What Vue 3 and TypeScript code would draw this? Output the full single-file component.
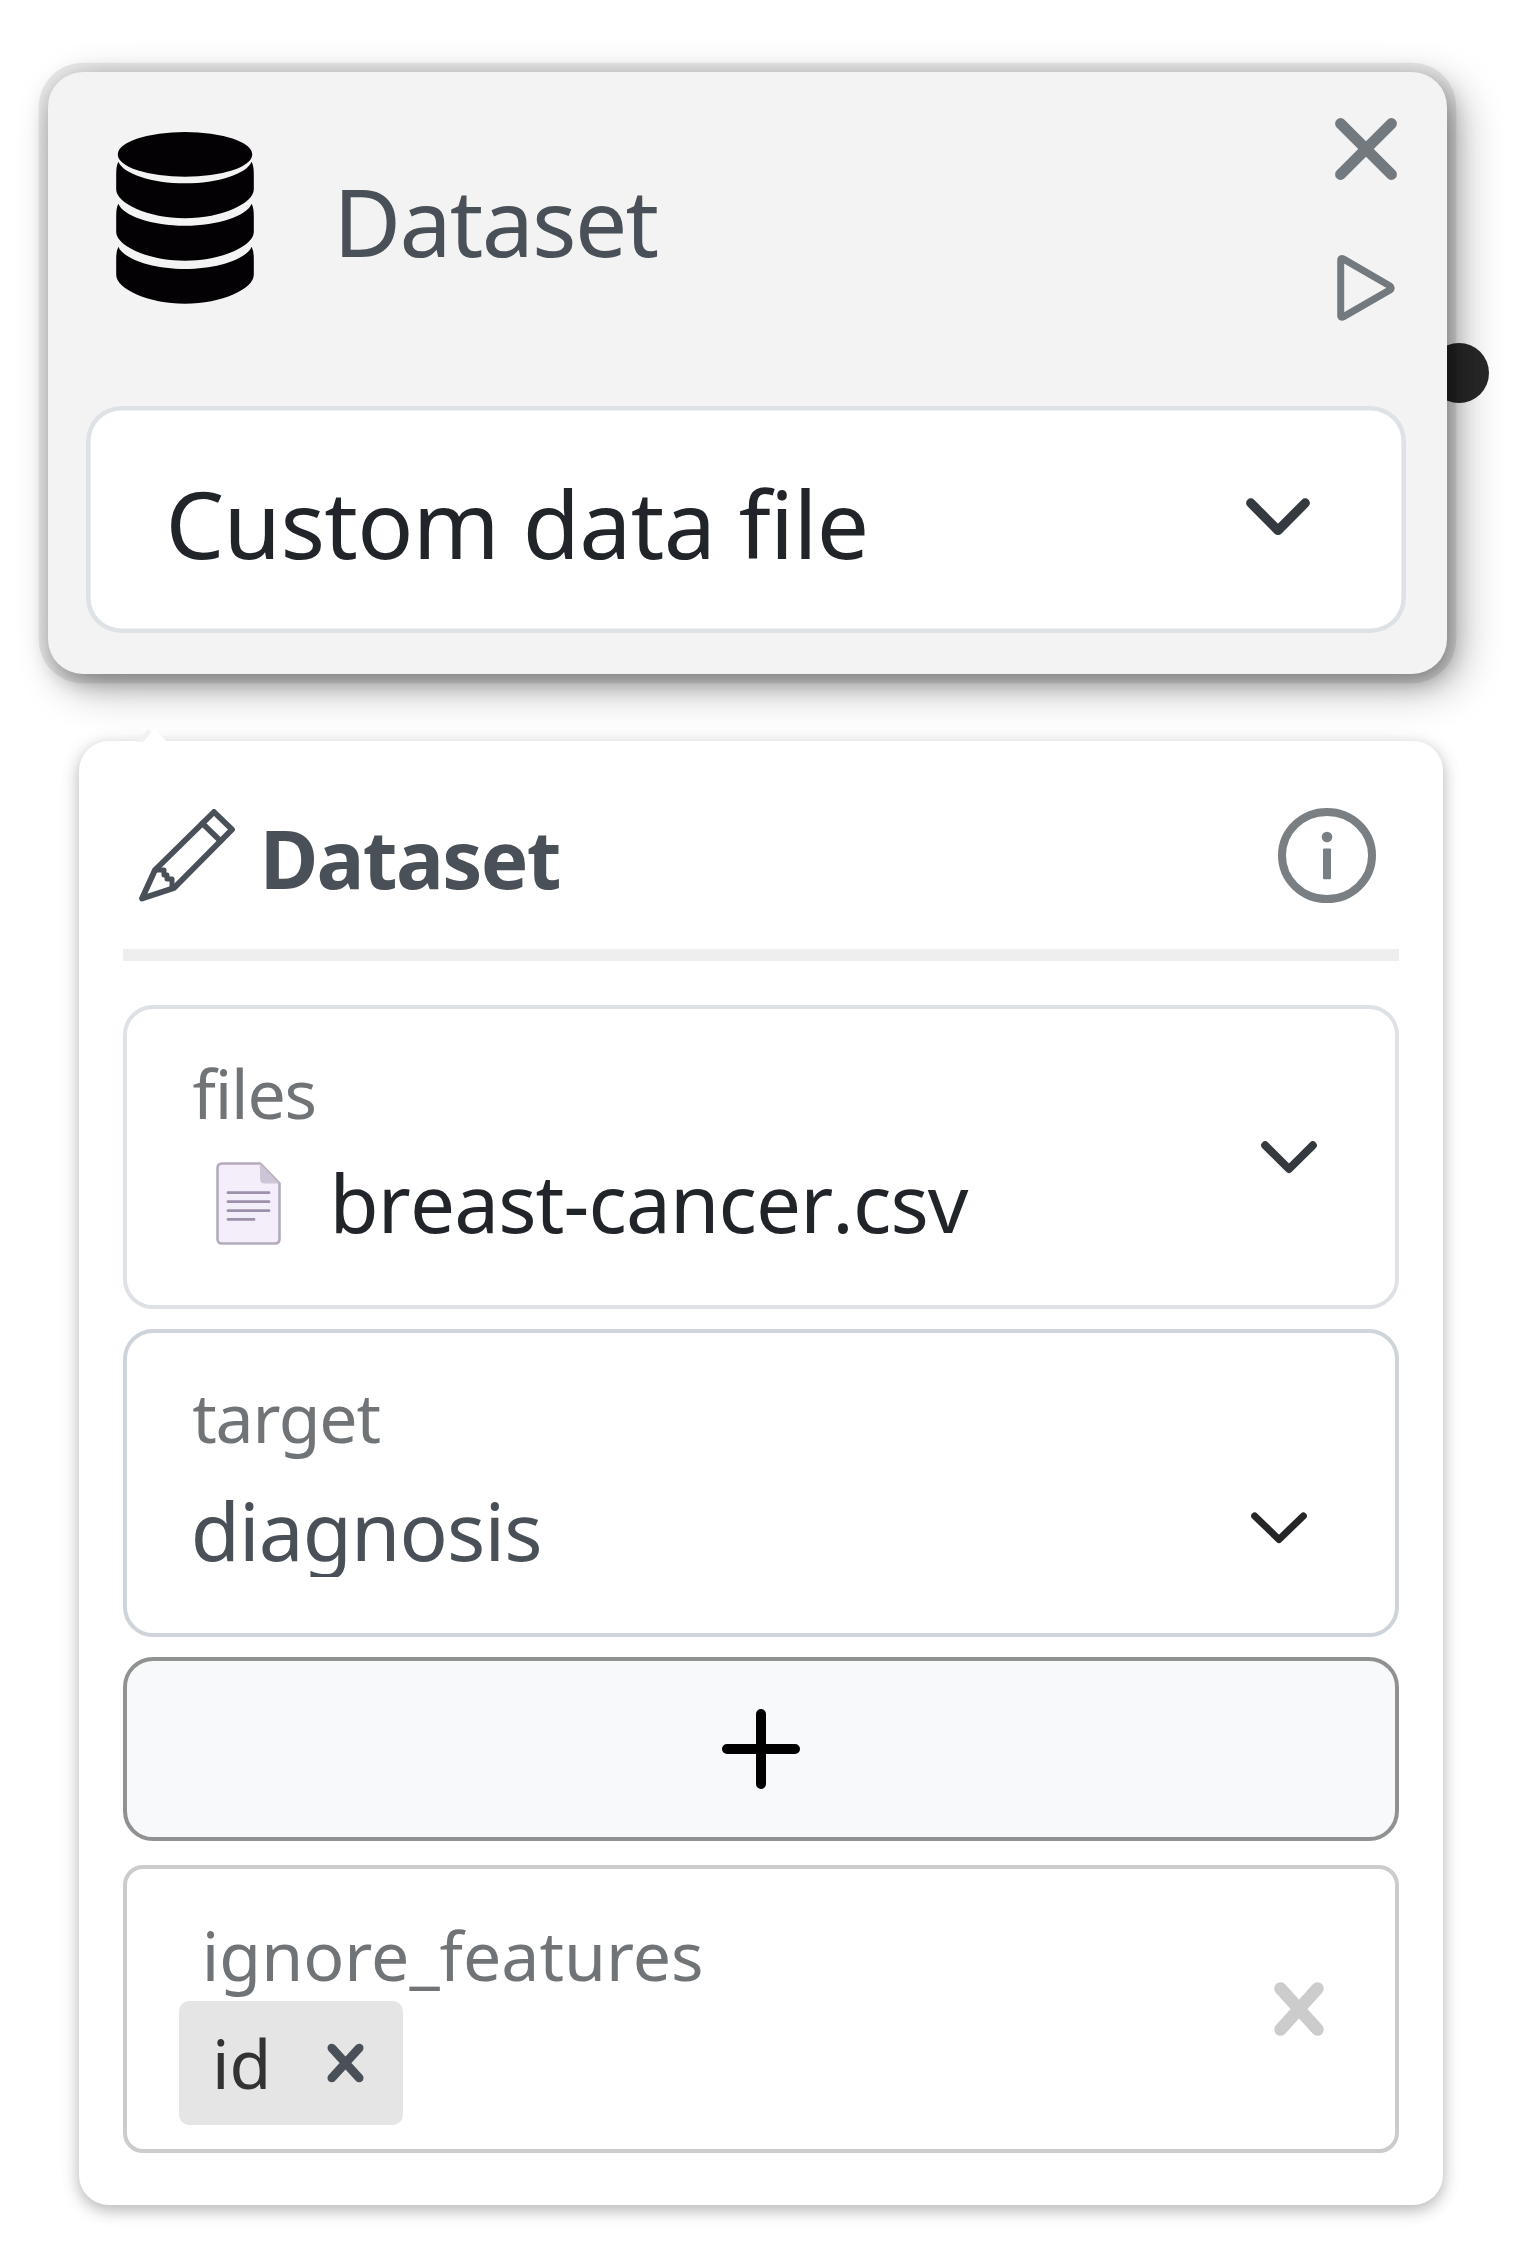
<script setup lang="ts">
import { ref } from 'vue'

interface DiskLayer {
  tip: number
  dip: number
  base: number
}

const nodeTitle = ref('Dataset')
const source = ref('Custom data file')
const fileName = ref('breast-cancer.csv')
const target = ref('diagnosis')
const ignored = ref<string[]>(['id'])

const layers: DiskLayer[] = [
  { tip: 29.7, dip: 51.3, base: 86.3 },
  { tip: 71.7, dip: 93.7, base: 128.7 },
  { tip: 114.7, dip: 137, base: 171.7 },
]

function layerPath({ tip, dip, base }: DiskLayer): string {
  return (
    `M2.4 ${tip}C7 ${tip + 12} 36 ${dip} 69 ${dip}S131 ${tip + 12} 135.6 ${tip}` +
    `Q137.8 ${tip + 4} 137.8 ${tip + 12}V${base - 29}C137.8 ${base - 15} 106 ${base} 69 ${base}` +
    `S.2 ${base - 15} .2 ${base - 29}V${tip + 12}Q.2 ${tip + 4} 2.4 ${tip}Z`
  )
}

function removeIgnored(name: string): void {
  ignored.value = ignored.value.filter((n) => n !== name)
}
</script>

<template>
  <main class="canvas">
    <section class="node">
      <span class="handle"></span>
      <div class="node-body">
        <header class="node-head">
          <svg class="db" viewBox="0 0 138 172">
            <ellipse cx="69" cy="22.4" rx="67.2" ry="22.4" />
            <path v-for="layer in layers" :key="layer.tip" :d="layerPath(layer)" />
          </svg>
          <h1 class="node-title">{{ nodeTitle }}</h1>
          <div class="actions">
            <svg class="close" viewBox="0 0 62 62"><path d="M5.6 5.6 56.4 56.4M56.4 5.6 5.6 56.4" /></svg>
            <svg class="play" viewBox="0 0 58 66"><path d="M3.7 5.6Q3.7 2.6 6.6 4.1L53 31Q55.5 32.9 53 34.9L6.6 61.6Q3.7 63.2 3.7 60.2Z" /></svg>
          </div>
        </header>
        <div class="select">
          <span class="select-text">{{ source }}</span>
          <svg class="chev-lg" viewBox="0 0 64 38"><path d="M4.8 5 32 32.4 59.2 5" /></svg>
        </div>
      </div>
    </section>

    <section class="panel">
      <svg class="notch" viewBox="0 0 34 14">
        <path d="M0 14 12 1 15 5 8 14Z" fill="#f2f2f2" />
        <path d="M7 14 19 1 31 14Z" fill="#fff" />
      </svg>
      <header class="panel-head">
        <svg class="pencil" viewBox="0 0 97 93">
          <path d="M75 3 93 20.5 35 79 3 89.5 16 61Z" />
          <path d="M63.5 14.5 81.5 32" />
          <path class="wood" d="M17 61H25V66H28V70H33V78" />
        </svg>
        <h2 class="panel-title">{{ nodeTitle }}</h2>
        <svg class="info" viewBox="0 0 98 95">
          <ellipse cx="49" cy="47.5" rx="45" ry="43.5" />
          <ellipse class="solid" cx="49" cy="29" rx="5.3" ry="5.2" />
          <rect class="solid" x="45" y="40.5" width="8" height="30.8" rx="1" />
        </svg>
      </header>

      <div class="fields">
        <div class="field files">
          <div class="field-main">
            <div class="label">files</div>
            <div class="file-row">
              <svg class="doc" viewBox="0 0 65 83">
                <path d="M6 1.5H44L63.5 21.5V77Q63.5 81.5 59 81.5H6Q1.5 81.5 1.5 77V6Q1.5 1.5 6 1.5Z" fill="#f3eef9" stroke="#b4abbd" stroke-width="2.6" />
                <path d="M44 1.5 63.5 21.5H49Q44 21.5 44 16.5Z" fill="#cdc5d6" />
                <path d="M12 30.7H53M12 39.7H53M12 48.7H53M12 57.4H38" stroke="#9d90aa" stroke-width="2.8" />
              </svg>
              <span class="value file-name">{{ fileName }}</span>
            </div>
          </div>
          <svg class="chev" viewBox="0 0 56 33"><path d="M4.2 4.3 28 28 51.8 4.3" /></svg>
        </div>

        <div class="field target">
          <div class="field-main">
            <div class="label">target</div>
            <div class="value target-value">{{ target }}</div>
          </div>
          <svg class="chev" viewBox="0 0 56 33"><path d="M3.7 4 28 27.5 52.3 4" /></svg>
        </div>

        <button class="add" type="button">
          <svg viewBox="0 0 80 80"><path d="M40 5V75M6 40H74" /></svg>
        </button>

        <div class="field ignore">
          <div class="field-main">
            <div class="label">ignore_features</div>
            <div class="tags">
              <div v-for="name in ignored" :key="name" class="tag">
                <span class="tag-text">{{ name }}</span>
                <svg viewBox="0 0 37 40" @click="removeIgnored(name)"><path d="M4.8 5 32.2 35M32.2 5 4.8 35" /></svg>
              </div>
            </div>
          </div>
          <svg class="clear" viewBox="0 0 50 54"><path d="M6.5 6.5 43.5 47.5M43.5 6.5 6.5 47.5" /></svg>
        </div>
      </div>
    </section>
  </main>
</template>

<style>
body {
  background: #fff;
}
</style>

<style scoped>
* {
  box-sizing: border-box;
}
.canvas {
  width: 1517px;
  height: 2258px;
  padding-top: 72.3px;
  overflow: hidden;
  background: #fff;
  font-family: 'Noto Sans', 'Open Sans', sans-serif;
  font-variant-ligatures: none;
}
svg {
  display: block;
  flex: none;
  fill: none;
  stroke-linecap: round;
  stroke-linejoin: round;
}
h1,
h2 {
  margin: 0;
}
.node {
  position: relative;
  width: 1399px;
  height: 602px;
  margin-left: 48.4px;
}
.handle {
  position: absolute;
  top: 270.5px;
  right: -42px;
  width: 60px;
  height: 60px;
  border-radius: 50%;
  background: #282828;
}
.node-body {
  position: relative;
  height: 100%;
  padding: 0 41.7px 0 37.6px;
  border-radius: 35px;
  background: #f3f3f3;
  box-shadow:
    0 0 0 9.3px rgba(0, 0, 0, 0.08),
    3px 8px 22px rgba(0, 0, 0, 0.27),
    13px 13px 44px rgba(0, 0, 0, 0.32);
}
.node-head {
  display: flex;
  align-items: flex-start;
  height: 333.4px;
}
.db {
  width: 138px;
  height: 172px;
  margin: 59.7px 0 0 30.3px;
  fill: #030103;
}
.node-title {
  margin: 98.8px 0 0 79px;
  font-size: 93px;
  font-weight: 400;
  line-height: 100px;
  letter-spacing: -1.75px;
  color: #495057;
}
.actions {
  display: flex;
  flex-direction: column;
  gap: 75px;
  margin: 45.4px 8.6px 0 auto;
  stroke: #737a7f;
}
.close {
  width: 62px;
  height: 62px;
  stroke-width: 11;
}
.play {
  width: 58px;
  height: 66px;
  margin-left: 1.6px;
  stroke-width: 7;
}
.select {
  display: flex;
  align-items: flex-start;
  height: 227px;
  padding: 0 96px 0 79.5px;
  border-radius: 35px;
  background: #fff;
  box-shadow: inset 0 0 0 4.6px #dee2e6;
}
.select-text {
  margin-top: 67.3px;
  font-size: 93px;
  line-height: 100px;
  letter-spacing: -0.65px;
  color: #212529;
  white-space: nowrap;
}
.chev-lg {
  width: 64px;
  height: 38px;
  margin: 92px 0 0 auto;
  stroke: #343a40;
  stroke-width: 9.4;
}
.panel {
  position: relative;
  width: 1363.8px;
  height: 1464.4px;
  margin: 66.4px 0 0 79.2px;
  padding: 0 44px 0 43.8px;
  border-radius: 30px;
  background: #fff;
  box-shadow:
    0 5px 16px rgba(0, 0, 0, 0.28),
    0 2px 30px rgba(0, 0, 0, 0.04);
}
.notch {
  position: absolute;
  top: -13px;
  left: 57px;
  width: 34px;
  height: 14px;
}
.panel-head {
  display: flex;
  align-items: flex-start;
  height: 220.3px;
  border-bottom: 12px solid #eee;
}
.pencil {
  width: 97px;
  height: 93px;
  margin: 68px 0 0 16.2px;
  stroke: #495057;
  stroke-width: 5.8;
}
.wood {
  stroke-width: 5;
}
.panel-title {
  margin: 67px 0 0 23.5px;
  font-size: 80px;
  font-weight: 700;
  line-height: 100px;
  letter-spacing: -1.65px;
  color: #495057;
}
.info {
  width: 98px;
  height: 95px;
  margin: 67.2px 23px 0 auto;
  stroke: #7a7f83;
  stroke-width: 8;
}
.solid {
  fill: #7a7f83;
  stroke: none;
}
.fields {
  display: flex;
  flex-direction: column;
  padding-top: 44px;
}
.field {
  display: flex;
  align-items: flex-start;
  justify-content: space-between;
  border: 4px solid #dee2e6;
  border-radius: 30px;
}
.label {
  font-size: 68px;
  line-height: 80px;
  letter-spacing: -1.2px;
  color: #707477;
}
.value {
  font-size: 80px;
  line-height: 100px;
  letter-spacing: -0.9px;
  white-space: nowrap;
}
.chev {
  width: 56px;
  height: 33px;
  stroke: #343a40;
  stroke-width: 8;
}
.files {
  height: 304px;
  padding: 43.6px 78.3px 0 65.6px;
}
.files .chev {
  margin-top: 88px;
}
.file-row {
  display: flex;
  margin-top: 19px;
}
.doc {
  width: 65px;
  height: 83px;
  margin: 10.4px 0 0 23.6px;
}
.file-name {
  margin-left: 48.4px;
  font-kerning: none;
  color: #212529;
}
.target {
  height: 308px;
  margin-top: 20px;
  padding: 43.6px 88px 0 65.2px;
  border-color: #ced4da;
}
.target-value {
  height: 97.3px;
  margin: 23px 0 0 -1.5px;
  overflow: hidden;
  color: #495057;
}
.target .chev {
  margin-top: 135px;
  stroke: #252627;
  stroke-width: 7;
}
.add {
  display: flex;
  align-items: center;
  justify-content: center;
  height: 184px;
  margin-top: 20px;
  padding: 0;
  border: 4px solid #909291;
  border-radius: 30px;
  background: #f8f9fb;
}
.add svg {
  width: 80px;
  height: 80px;
  stroke: #000;
  stroke-width: 10;
}
.ignore {
  height: 288px;
  margin-top: 24px;
  padding: 45.6px 71.3px 0 52px;
  border-color: #ccc;
  border-radius: 20px;
}
.ignore .label {
  margin-left: 22.8px;
  letter-spacing: 0;
}
.tags {
  display: flex;
  margin-top: 6.4px;
}
.tag {
  display: flex;
  align-items: flex-start;
  width: 224px;
  height: 124px;
  padding: 11.6px 39.4px 0 33px;
  border-radius: 10px;
  background: #e5e5e5;
}
.tag-text {
  font-size: 68px;
  line-height: 100px;
  color: #333;
}
.tag svg {
  width: 37px;
  height: 40px;
  margin: 30.4px 0 0 auto;
  stroke: #495057;
  stroke-width: 8.6;
}
.clear {
  width: 50px;
  height: 54px;
  margin-top: 67px;
  stroke: #ccc;
  stroke-width: 12.5;
}
</style>
